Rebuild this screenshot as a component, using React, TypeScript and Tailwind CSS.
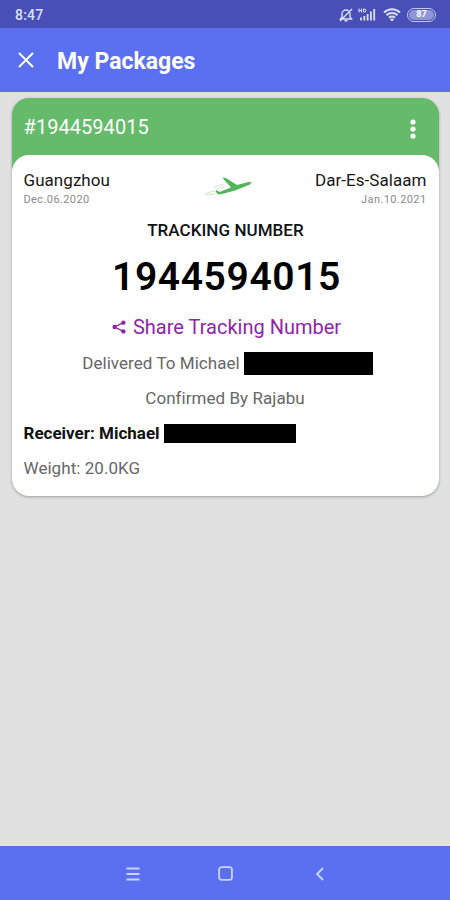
import { ReactNode } from 'react'

const parcel = {
  number: '1944594015',
  from: { city: 'Guangzhou', date: 'Dec.06.2020' },
  to: { city: 'Dar-Es-Salaam', date: 'Jan.10.2021' },
  deliveredTo: 'Michael',
  confirmedBy: 'Rajabu',
  weight: '20.0KG',
}

const StatusBar = () => (
  <div className="flex h-7 items-center justify-between bg-[#4850b8] pl-[15px] pr-[14px] text-[#dcdffa]">
    <span className="mt-[2px] text-[14px] font-medium leading-7 tracking-[0.2px]">8:47</span>
    <div className="mt-px flex items-center">
      <svg width="16" height="16" viewBox="0 0 16 16" fill="none" stroke="currentColor" strokeWidth="1.4">
        <path d="M2.5 12h11L12 10V7a4 4 0 0 0-8 0v3zM6.5 13.8h3M2 14L14 2" />
      </svg>
      <svg className="ml-[4px]" width="18" height="16" viewBox="0 0 18 16" fill="none" stroke="currentColor">
        <path d="M1 1.5v4M3.5 1.5v4M1 3.5h2.5M5.5 2h1.5l1 1v1l-1 1H5.5z" strokeWidth="1" />
        <path d="M3 13.5v-3M6.3 13.5V9M9.6 13.5V7M12.9 13.5v-9M16.2 13.5V2" strokeWidth="1.8" />
      </svg>
      <svg className="ml-[7px]" width="18" height="16" viewBox="0 0 18 16" fill="none" stroke="currentColor" strokeWidth="2">
        <path d="M1 5.5a11.5 11.5 0 0 1 16 0M3.5 8.2a8 8 0 0 1 11 0M6 10.8a4.4 4.4 0 0 1 6 0" />
        <path d="M9 14.5l-2-2.1a3 3 0 0 1 4 0z" fill="currentColor" stroke="none" />
      </svg>
      <div className="ml-[6px] flex h-[14px] w-[29px] items-center justify-center rounded-full border-[1.5px] border-[#c5c9f2] p-[1px]">
        <span className="flex h-full w-full items-center justify-center rounded-full bg-[#8f96dc] text-[9px] font-bold leading-none text-white">
          87
        </span>
      </div>
    </div>
  </div>
)

const Header = () => (
  <div className="flex h-16 items-center bg-[#5b70f0] pl-[18px] text-white">
    <svg width="16" height="16" viewBox="0 0 16 16" stroke="currentColor" strokeWidth="2">
      <path d="M1 1l14 14M15 1L1 15" />
    </svg>
    <h1 className="ml-[23px] mt-[3px] text-[23px] font-bold leading-8">My Packages</h1>
  </div>
)

const Plane = () => (
  <svg className="mr-[-3px] mt-[5px]" width="50" height="22" viewBox="0 0 50 22">
    <path
      d="M20.5 3c1.5-.6 3-.3 4.2.4L35 10l9.5-2.6c2.5-.6 4.6-.6 4.9.2s-1.6 2.2-4.4 3.2L33 15.6 20 19c-2 .5-3.8.6-4.6-.2-.9-.9-1.9-2.6-1.7-3.4l1.3-.1 2.5 1.8L29 12.4z"
      fill="#54b45b"
    />
    <path
      d="M3 19.2c3-1.6 6-2.6 10-3.4M5 20c3-.7 5-.9 8-1M12 12.2c3-1.3 6-2.3 9.500-2.700M15 13.800l7-2"
      fill="none"
      stroke="#b5dfb8"
      strokeWidth=".8"
    />
  </svg>
)

const Place = ({ city, date, right }: { city: string; date: string; right?: boolean }) => (
  <div className={`flex w-[150px] flex-col ${right ? 'items-end' : 'items-start'}`}>
    <span className="text-[17px] leading-5 tracking-[0.05px] text-[#171717]">{city}</span>
    <span className="mt-[2px] text-[11px] leading-4 tracking-[0.4px] text-[#8a8a8a]">{date}</span>
  </div>
)

const Row = ({ children }: { children: ReactNode }) => (
  <p className="flex h-[35px] items-center justify-center text-[17px] tracking-[0.05px] text-[#666]">{children}</p>
)

const PackageCard = () => (
  <div className="mx-auto mt-1.5 w-[427px] rounded-[17px] bg-[#66bb6a] shadow-[0_1px_3px_rgba(0,0,0,0.3)]">
    <div className="flex h-[57px] items-center justify-between pl-3 pr-[23px] text-white">
      <span className="mt-px text-xl tracking-[0.05px]">#{parcel.number}</span>
      <svg className="mt-1" width="6" height="20" viewBox="0 0 6 20" fill="currentColor">
        <circle cx="3" cy="3" r="2.6" />
        <circle cx="3" cy="10" r="2.6" />
        <circle cx="3" cy="17" r="2.6" />
      </svg>
    </div>

    <div className="h-[341px] rounded-[17px] bg-white px-3 pt-[15px]">
      <div className="flex justify-between">
        <Place {...parcel.from} />
        <Plane />
        <Place {...parcel.to} right />
      </div>

      <h2 className="mt-[10px] pl-px text-center text-[17px] font-medium leading-6 tracking-[0.05px] text-[#111]">
        TRACKING NUMBER
      </h2>
      <p className="mt-[11px] pl-[3px] text-center text-[39px] font-semibold leading-[48px] tracking-[0.6px] text-black">
        {parcel.number}
      </p>

      <div className="mt-[14px] flex h-6 items-center justify-center pl-[3px] text-xl text-[#8e24aa]">
        <svg className="mr-[7px]" width="14" height="14" viewBox="0 0 16 16">
          <path d="M13 3L3 8l10 5" fill="none" stroke="currentColor" strokeWidth="1.5" />
          <circle cx="13" cy="3" r="2.5" fill="currentColor" />
          <circle cx="3" cy="8" r="2.5" fill="currentColor" />
          <circle cx="13" cy="13" r="2.5" fill="currentColor" />
        </svg>
        Share Tracking Number
      </div>

      <div className="mt-[7px]">
        <Row>
          <span className="ml-[5px] mt-px">Delivered To {parcel.deliveredTo}</span>
          <span className="ml-1 h-[23px] w-[129px] bg-black" />
        </Row>
        <Row>
          <span className="mt-px">Confirmed By {parcel.confirmedBy}</span>
        </Row>
      </div>

      <p className="flex h-[35px] items-center text-[17px] font-bold text-[#111]">
        <span className="mt-px">Receiver: {parcel.deliveredTo}</span>
        <span className="ml-1 h-[19px] w-[132px] bg-black" />
      </p>
      <p className="flex h-[35px] items-center pt-px text-[17px] tracking-[0.05px] text-[#666]">Weight: {parcel.weight}</p>
    </div>
  </div>
)

const NavBar = () => (
  <div className="flex h-[54px] items-center bg-[#5b70f0] pl-[126px] pt-px text-[#c9d3fc]">
    <svg width="14" height="14" viewBox="0 0 14 14" stroke="currentColor" strokeWidth="1.9">
      <path d="M0.5 1.5h13M0.5 7h13M0.5 12.5h13" />
    </svg>
    <svg className="ml-[78px]" width="15" height="15" viewBox="0 0 14 14" fill="none" stroke="currentColor" strokeWidth="1.7">
      <rect x="1" y="1" width="12" height="12" rx="2.5" />
    </svg>
    <svg className="ml-[83px]" width="8" height="14" viewBox="0 0 8 14" fill="none" stroke="currentColor" strokeWidth="1.9">
      <path d="M7 1L1.2 7 7 13" />
    </svg>
  </div>
)

export default function App() {
  return (
    <div className="flex h-[900px] w-[450px] flex-col bg-[#e1e1e1] font-[Roboto,sans-serif]">
      <StatusBar />
      <Header />
      <div className="flex-1">
        <PackageCard />
      </div>
      <NavBar />
    </div>
  )
}
